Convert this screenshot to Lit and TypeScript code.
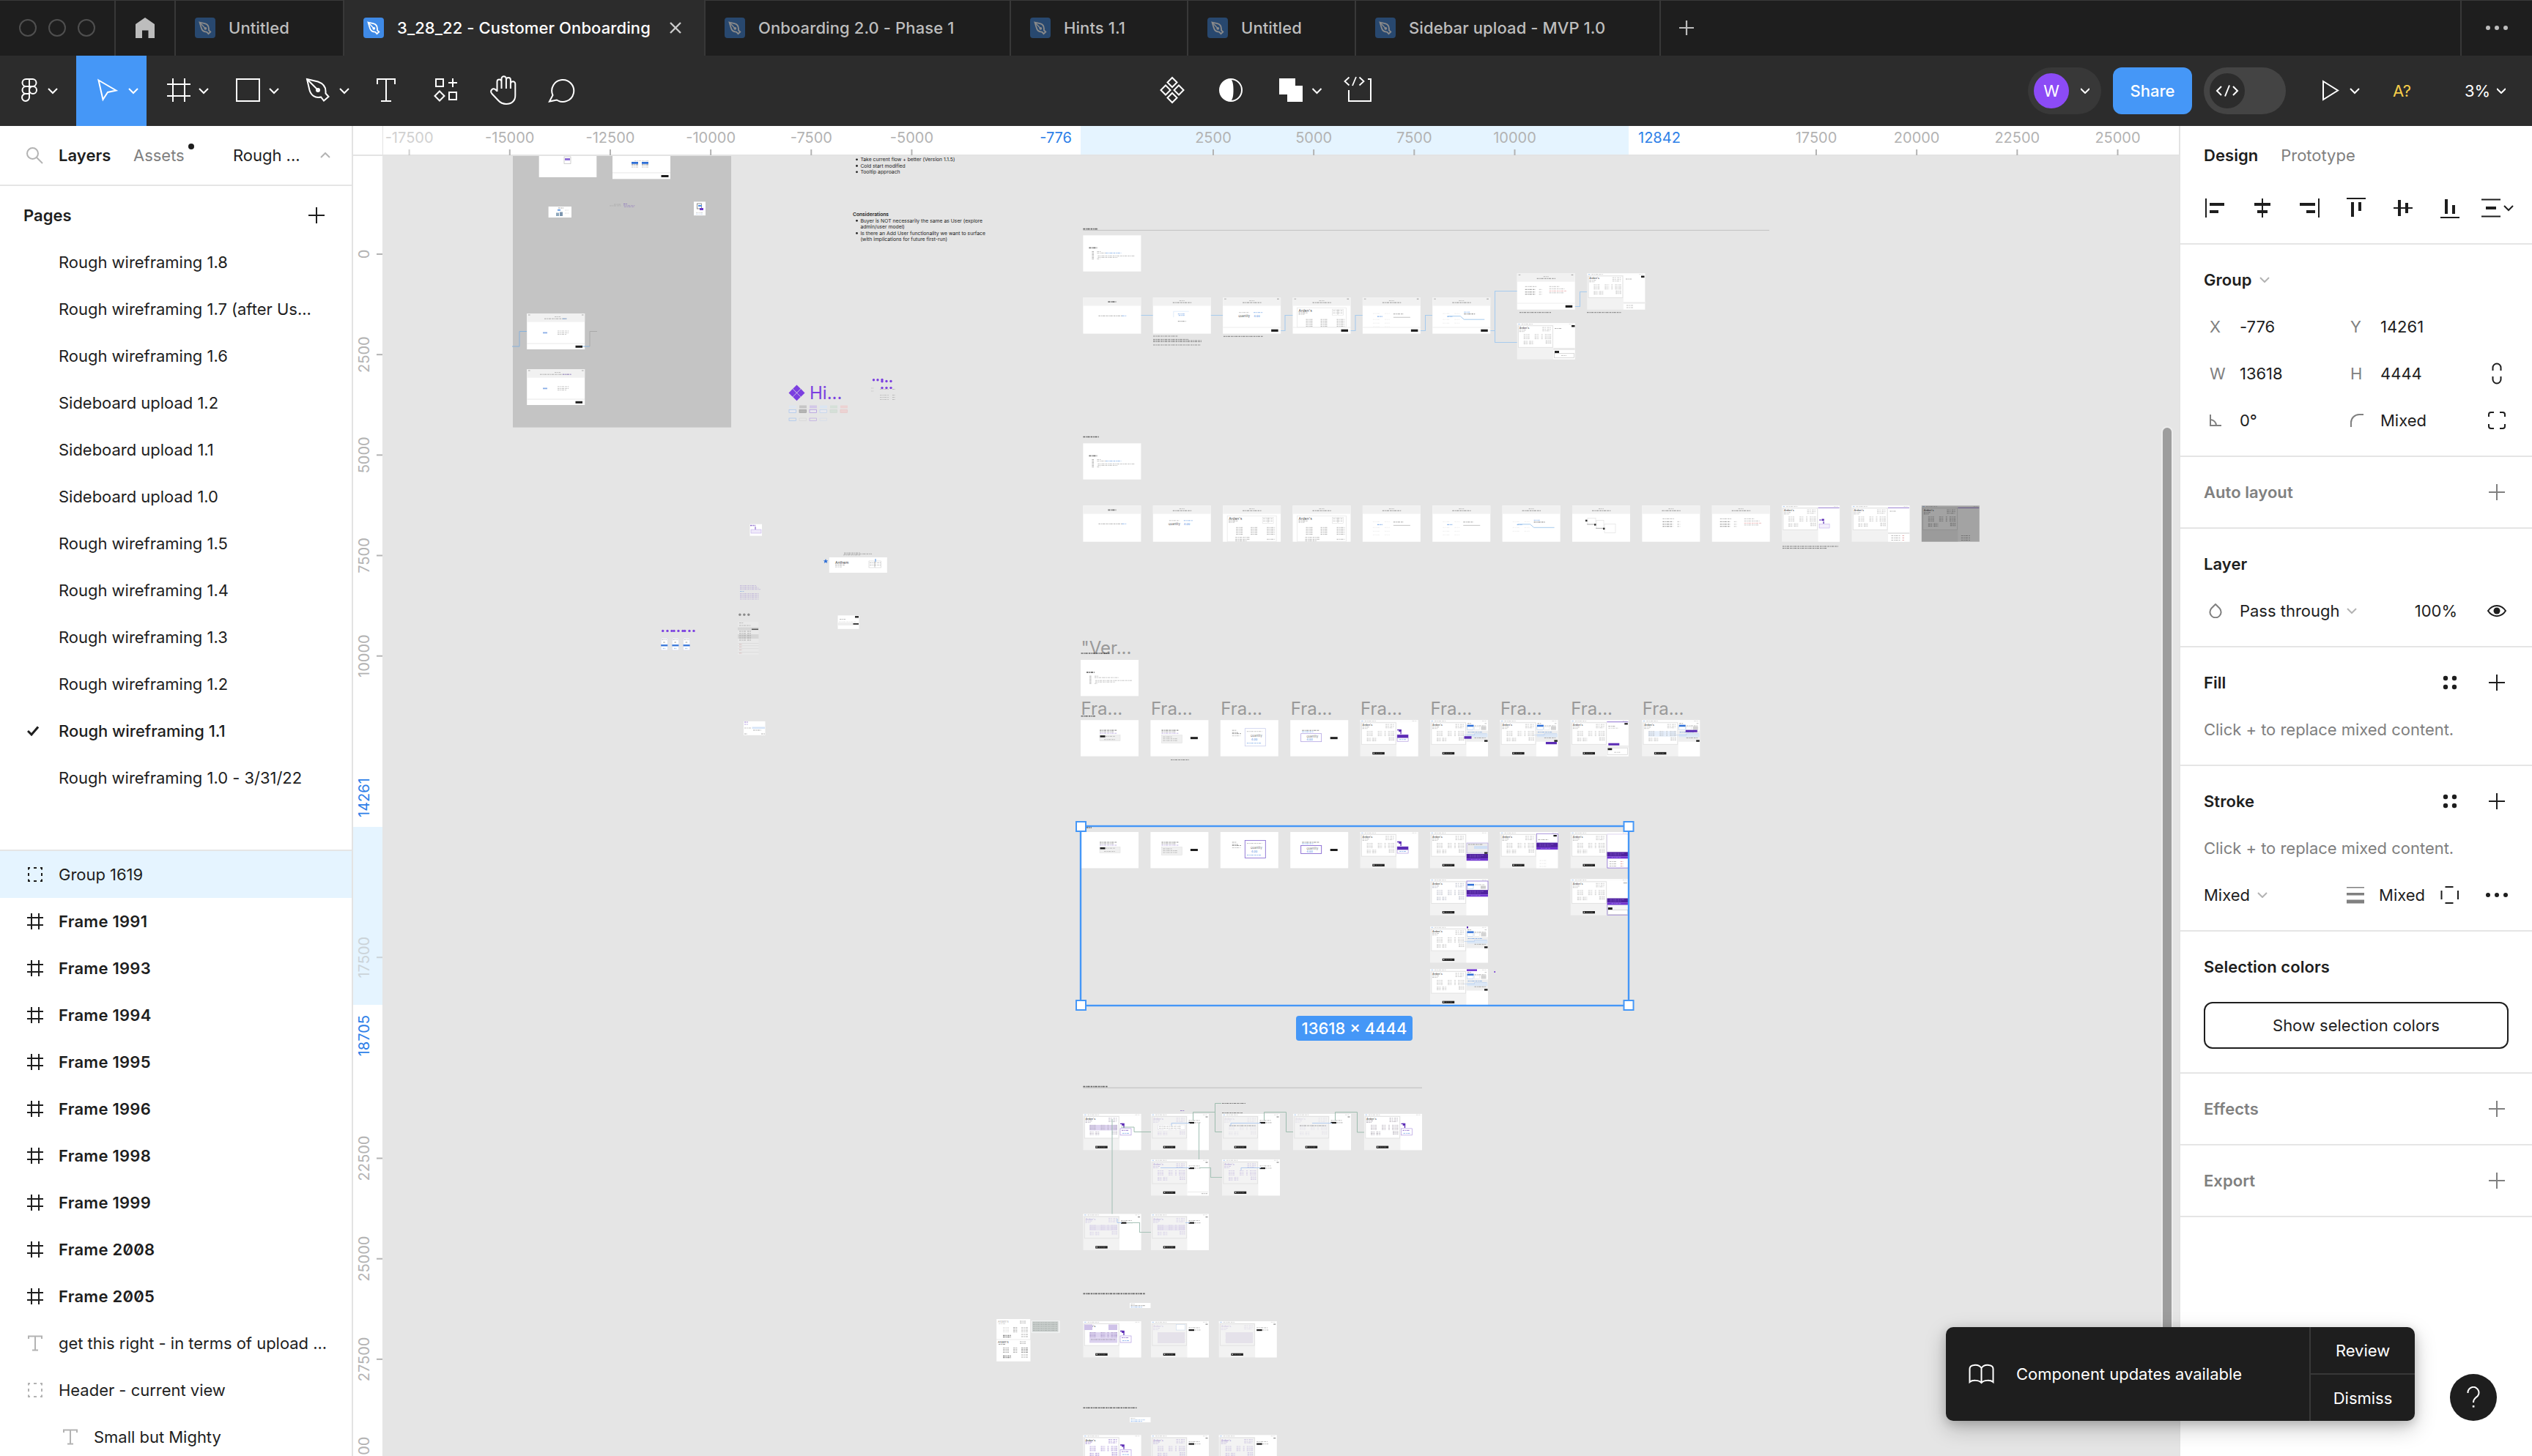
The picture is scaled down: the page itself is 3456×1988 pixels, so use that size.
import { LitElement, html, svg, css, nothing } from "lit";
import { customElement } from "lit/decorators.js";
import { classMap } from "lit/directives/class-map.js";

/* ---------- shared shapes ---------- */
const chev = (x: number, y: number, c = "#fff") =>
  svg`<path d="M${x - 6} ${y - 3}l6 6l6 -6" fill="none" stroke=${c} stroke-width="2"/>`;

const box = (w: number, h: number, body: unknown, cls = "") =>
  html`<svg class=${cls} width=${w} height=${h} viewBox="0 0 ${w} ${h}" fill="none">${body}</svg>`;

const plus = (c: string, s = 22, w = 2) =>
  box(s, s, svg`<path d="M${s / 2} 0v${s}M0 ${s / 2}h${s}" stroke=${c} stroke-width=${w}/>`);

const fileIcon = (on: boolean) => {
  const c = on ? "#fff" : "#8b8b8b";
  return box(28, 28, svg`
    <rect width="28" height="28" rx="4" fill=${on ? "#3f8ae6" : "#28486f"}/>
    <path d="M6.500 6.500L13.500 8.200C17.500 9.200 19 11.500 19 15.500V17.300L21.300 19.500L18.500 22.200L16.200 19.600C11.500 19.800 9.600 17.500 8.600 13.500Z" stroke=${c} stroke-width="1.8" fill="none"/>
    <path d="M7 7L14 14.500" stroke=${c} stroke-width="1.4"/><circle cx="14.300" cy="14.800" r="1.900" fill=${c}/>`);
};

const frameIcon = box(22, 22, svg`<path d="M6 0v22M16 0v22M0 6h22M0 16h22" stroke="#1e1e1e" stroke-width="2"/>`);
const groupIcon = (c: string) => box(22, 22, svg`<path d="M2 4.500V2H4M9 2h4M18 2h2V4.500M20 9v4M20 17.500V20H18M13 20H9M4 20H2V17.500M2 13V9" stroke=${c} stroke-width="2"/>`);
const textIcon = box(22, 22, svg`<path d="M2 5V1.500H20V5M11 1.500V20.500M7 20.500h8" stroke="#b3b3b3" stroke-width="2"/>`);

/* ---------- data ---------- */
const TABS = [
  { w: 230, t: "Untitled" },
  { w: 493, t: "3_28_22 - Customer Onboarding", on: true },
  { w: 417, t: "Onboarding 2.0 - Phase 1" },
  { w: 242, t: "Hints 1.1" },
  { w: 229, t: "Untitled" },
  { w: 416, t: "Sidebar upload - MVP 1.0" },
];

const PAGES = ["Rough wireframing 1.8", "Rough wireframing 1.7 (after Us...", "Rough wireframing 1.6", "Sideboard upload 1.2",
  "Sideboard upload 1.1", "Sideboard upload 1.0", "Rough wireframing 1.5", "Rough wireframing 1.4", "Rough wireframing 1.3",
  "Rough wireframing 1.2", "Rough wireframing 1.1", "Rough wireframing 1.0 - 3/31/22"];

const FRAMES = ["1991", "1993", "1994", "1995", "1996", "1998", "1999", "2008", "2005"];

/* ---------- canvas drawing helpers (canvas coordinates) ---------- */
const R = (x: number, y: number, w: number, h: number, f: string, s?: string, sw = 1) =>
  svg`<rect x=${x} y=${y} width=${w} height=${h} fill=${f} stroke=${s ?? "none"} stroke-width=${sw}/>`;
const ln = (x: number, y: number, w: number, c = "#999", h = 0.9) =>
  svg`<path d="M${x} ${y}h${w}" stroke=${c} stroke-opacity=".66" stroke-width=${h} stroke-dasharray="2.600 .9 1.500 .7 3.400 1.100" fill="none"/>`;
const P = (d: string, c: string, w = 1.2) => svg`<path d=${d} stroke=${c} stroke-width=${w} fill="none"/>`;
const T = (x: number, y: number, s: number, c: string, t: string, w = 400) =>
  svg`<text x=${x} y=${y} font-size=${s} fill=${c} font-weight=${w}>${t}</text>`;
const dot = (x: number, y: number, c: string, r = 1.7) => svg`<circle cx=${x} cy=${y} r=${r} fill=${c}/>`;

const BL = "#4f8de0", PU = "#5b2bb5", LB = "#a6cbee", GR = "#a7c3b8";

const overview = (x: number, y: number, blue = true) => svg`
  ${R(x, y, 79, 49.400, "#fff")}
  ${ln(x + 8, y + 17, 11, "#333", 1.8)}
  ${[0, 1, 2, 3, 4, 5].map((i) => ln(x + 12, y + 22.200 + i * 2, 3.500, "#777"))}
  ${ln(x + 19, y + 22.200, 5)}${ln(x + 19, y + 24.200, 12)}${ln(x + 31, y + 24.200, 21, blue ? BL : "#999")}
  ${ln(x + 20, y + 28.200, 50, "#999")}${ln(x + 20, y + 30.200, 27)}${ln(x + 19, y + 32.200, 4)}`;

const header = (x: number, y: number, kind: string, foot = false) => svg`
  ${R(x, y, 79, 49.400, "#fff")}${R(x, y, 79, 11.300, "#f1f1f1")}
  ${kind === "start" ? svg`${ln(x + 34, y + 6, 11, "#333", 1.800)}${ln(x + 21, y + 25, 32, "#888", 1.100)}${ln(x + 53, y + 25, 6, BL, 1.100)}`
    : svg`${ln(x + 36, y + 4.400, 7, "#888", 0.800)}${ln(x + 27, y + 7, 26, "#666", 1)}`}
  ${kind === "upload" ? svg`${P(`M${x + 28} ${y + 19}h21M${x + 28} ${y + 19}v8`, "#c5daf4", 0.5)}${ln(x + 34, y + 22.500, 10, BL)}${ln(x + 35, y + 24.500, 8, BL)}${ln(x + 34, y + 32.500, 11, "#555")}` : nothing}
  ${kind === "qty" ? svg`${ln(x + 22, y + 20.500, 14, "#999")}${ln(x + 42, y + 20.500, 12, BL)}${T(x + 21, y + 26.500, 4, "#555", "Quantity")}${T(x + 42, y + 26.500, 4, BL, "4.00")}` : nothing}
  ${kind === "doc" ? svg`${R(x + 6, y + 14, 67, foot ? 26.500 : 35, "#fff", "#e8e8e8", 0.8)}${T(x + 8, y + 19.500, 5, "#555", "Arden's")}
    ${ln(x + 8, y + 21, 12, "#777")}${ln(x + 8, y + 23, 8, "#999")}
    ${R(x + 54, y + 16, 7, 8, "none", "#ddd", 0.6)}${R(x + 62, y + 16, 7, 8, "none", "#ddd", 0.6)}${ln(x + 55, y + 18, 13)}${ln(x + 55, y + 21, 13)}
    ${[0, 1, 2, 3, 4].map((i) => svg`${ln(x + 18, y + 30 + i * 2.300, 9, "#888")}${ln(x + 38, y + 30 + i * 2.300, 9, "#888")}${ln(x + 60, y + 30 + i * 2.300, 11, "#888")}`)}
    ${foot ? nothing : svg`${ln(x + 17, y + 43.500, 20, "#888")}${ln(x + 17, y + 46, 20, "#888")}${ln(x + 17, y + 48, 16, "#888")}${ln(x + 60, y + 46, 11, "#888")}`}` : nothing}
  ${kind === "pick" ? svg`${ln(x + 20, y + 26, 7, BL, 1.300)}${[22, 30, 35, 40].map((d) => svg`${ln(x + 14, y + d, 9, "#e4e4e4")}${ln(x + 30, y + d, 7, "#e4e4e4")}`)}${ln(x + 42, y + 22.500, 14, "#666")}${R(x + 42, y + 26.500, 23, 1.200, "#ccc")}` : nothing}
  ${kind === "link" ? svg`${ln(x + 20, y + 26, 7, BL, 1.300)}${[22, 30, 35].map((d) => svg`${ln(x + 14, y + d, 9, "#e4e4e4")}${ln(x + 30, y + d, 7, "#e4e4e4")}`)}${P(`M${x + 21} ${y + 25.500}H${x + 38}L${x + 43} ${y + 30}H${x + 71}`, LB, 1)}${ln(x + 43, y + 20, 8, BL)}${ln(x + 43, y + 22.500, 15, "#666", 1.300)}` : nothing}
  ${kind === "flow" ? svg`${R(x + 21, y + 17, 11, 9, "none", "#ddd", 0.6)}${R(x + 33, y + 20, 10, 11, "none", "#ddd", 0.6)}${R(x + 44, y + 25, 15, 12, "none", "#ddd", 0.6)}
    ${R(x + 18, y + 19.300, 2.500, 2.500, "#333")}${R(x + 30, y + 24.800, 2.500, 2.500, "#333")}${R(x + 42, y + 30.300, 2.500, 2.500, "#333")}${P(`M${x + 20} ${y + 25.500}h10M${x + 32} ${y + 31}h10`, "#999", 0.700)}` : nothing}
  ${kind === "list" || kind === "list2" ? svg`${ln(x + (kind === "list" ? 28 : 11), y + 18, 16, "#888")}
    ${[22, 25.500, 28.500].map((d) => svg`${ln(x + (kind === "list" ? 28 : 11), y + d, 14, "#555", 1.100)}${ln(x + (kind === "list" ? 48 : 30), y + d, 4, "#999")}`)}
    ${kind === "list2" ? svg`${ln(x + 44, y + 18, 14)}${ln(x + 44, y + 21, 21)}${ln(x + 44, y + 24, 24, "#d98080")}${ln(x + 44, y + 26.500, 20)}` : nothing}` : nothing}
  ${foot ? svg`${R(x, y + 40.300, 79, 1, "#eee")}${R(x + 66, y + 43.500, 9.500, 3.200, "#1d1d1d")}${ln(x + 2, y + 2, 3, "#777")}${ln(x + 74, y + 2, 3, "#555")}` : nothing}`;

const small = (x: number, y: number, k: number) => svg`
  ${R(x, y, 79, 49.400, "#fff")}
  ${k < 2 ? svg`${ln(x + (k ? 15 : 26), y + 14, 24, "#555", 1.200)}${ln(x + (k ? 15 : 26), y + 16, 19, "#777")}${ln(x + (k ? 15 : 26), y + 18, 24, "#9a7fd0")}
    ${R(x + (k ? 15 : 26), y + 20.500, 28, k ? 11 : 8, "#f0f0f0", "#dcdcdc", 0.5)}${k ? svg`${ln(x + 17, y + 23, 12, "#888")}${ln(x + 17, y + 25.500, 20)}${ln(x + 17, y + 28, 20)}` : svg`${R(x + 26.500, y + 21, 7, 2.500, "#1d1d1d")}${ln(x + 34, y + 22.200, 13)}${ln(x + 32, y + 26.500, 15)}`}` : nothing}
  ${k === 2 ? svg`${ln(x + 16, y + 14, 6, "#666")}${ln(x + 16, y + 17, 8, "#666")}${ln(x + 16, y + 18.500, 12, "#444")}${ln(x + 16, y + 21.500, 11)}
    ${R(x + 33.500, y + 11.500, 28, 24, "#fff", "#c3c8ea", 0.700)}${ln(x + 36, y + 15.500, 21)}${T(x + 41, y + 23, 4, "#777", "Quantity")}${T(x + 42, y + 27.500, 4, BL, "4.00")}${ln(x + 36, y + 31.500, 20, BL)}` : nothing}
  ${k === 3 ? svg`${ln(x + 16, y + 14, 24, "#555", 1.100)}${ln(x + 16, y + 16, 16, BL)}${R(x + 14.500, y + 18.500, 28, 11, "#fff", "#a796dd", 0.700)}${T(x + 22, y + 23.500, 4, "#777", "Quantity")}${T(x + 22, y + 28, 4, BL, "4.00")}` : nothing}
  ${k === 1 || k === 3 ? R(x + 54.500, y + 23, 10, 3, "#1d1d1d") : nothing}`;

/* two-pane editor thumbnail; `o.c` colours the cell text, `o.p` selects the right pane */
const doc = (x: number, y: number, o: { c?: string; dim?: boolean; p?: string; hl?: string } = {}) => {
  const c = o.c ?? "#a6a6a6";
  const paper = o.dim ? "#f3f3f3" : "#fff";
  const r = x + 49.500;
  return svg`
  ${R(x, y, 79, 49.400, "#f2f2f2")}${R(x, y, 79, 2.400, "#fff")}${ln(x + 1.500, y + 1.300, 3, BL, 0.7)}${ln(x + 6, y + 1.300, 16, "#999", 0.7)}${ln(x + 71, y + 1.300, 6, "#bbb", 0.7)}
  ${R(x + 1.800, y + 3.600, 46.800, 29.500, paper, "#e0e0e0", 0.9)}
  ${T(x + 3, y + 8, 3.600, o.dim ? c : "#666", "Arden's", 600)}${ln(x + 3, y + 9.500, 9, c, 1)}${ln(x + 3, y + 11.500, 7, c, 1)}
  ${ln(x + 34.500, y + 6, 5, c)}${ln(x + 41, y + 6, 5, c)}${ln(x + 34.500, y + 8.300, 5, c)}${ln(x + 41, y + 8.300, 5, c)}${ln(x + 34.500, y + 10.500, 11, c)}
  ${o.hl ? R(x + 8.500, y + 15, 38, 7.500, o.hl) : nothing}
  ${[15.500, 17.700, 19.500, 21.300].map((d) => svg`${ln(x + 9, y + d, 8, c, 0.8)}${ln(x + 24, y + d, 6, c, 0.8)}${ln(x + 33, y + d, 2, c, 0.8)}${ln(x + 38, y + d, 8.500, c, 0.8)}`)}
  ${[24.800, 26.600, 28.300].map((d) => svg`${ln(x + 9, y + d, 6, c, 0.9)}${ln(x + 16.500, y + d, 6, c, 0.9)}${ln(x + 39, y + d - 0.8, 7.500, c)}`)}
  ${R(r, y + 2.400, 29.500, 47, "#fff")}
  ${o.p === "none" ? nothing : R(x + 16.700, y + 43.700, 16.500, 3.300, "#222")}${o.p === "none" ? nothing : svg`${R(x + 18, y + 44.600, 1.300, 1.300, "#fff")}${ln(x + 21, y + 45.300, 10, "#888", 0.8)}`}
  ${o.p === "tip" || o.p === "tipo" ? svg`${P(`M${r + 1} ${y + 13.500}h3M${r + 6} ${y + 16}v3`, PU, 1.300)}${R(r + 3.200, y + 12.800, 3.600, 3.200, PU)}
    ${R(r + 1, y + 20, 15, 9, "#fff", "#a58bdc", 0.6)}${o.p === "tip" ? R(r + 1, y + 20, 15, 4.300, PU) : ln(r + 3, y + 22.500, 10, PU)}${ln(r + 4, y + 26.500, 9, BL)}` : nothing}
  ${o.p === "side" || o.p === "low" || o.p === "mid" ? svg`${ln(r + 1.500, y + 4.600, 5, "#666")}${ln(r + 25, y + 4.600, 3, "#999")}
    ${R(r + 1, y + 6.500, 9, 2.500, "#2f6fd6")}${ln(r + 11, y + 7.800, 16, "#999", 1.200)}${R(r + 1, y + 9, 8.500, 4.500, "#fff", "#9fc0ec", 0.5)}${R(r + 11, y + 9, 7, 4.500, "#fff", "#ddd", 0.5)}${R(r + 20, y + 8.500, 7, 5, "#d3d3d3")}
    ${R(r, y + 14.500, 29.500, 15, "#eee")}${ln(r + 2, y + 16.500, 20, BL)}${R(r + 1, y + 18.800, 28, 4.500, "#dbe7f6")}${P(`M${r - 3} ${y + 20.500}h14v-2h17`, "#a9c6ee", 0.500)}${ln(r + 11, y + 24.300, 16, "#777")}${R(r + 24.500, y + 27.200, 4.500, 2.400, "#1d1d1d")}` : nothing}
  ${o.p === "side" ? R(r - 3, y + 22, 10, 3.500, PU) : nothing}
  ${o.p === "low" ? R(r + 13, y + 29.800, 15, 3.200, PU) : nothing}
  ${o.p === "mid" && o.hl ? R(r + 10, y + 13.500, 16, 3, PU) : nothing}
  ${o.p === "panel" ? svg`${R(r, y + 2, 29, 1, "#8c6fd0")}${R(r + 24, y + 4, 4.500, 2.200, "#1d1d1d")}${ln(r + 2, y + 8.400, 9, "#777")}${ln(r + 2, y + 11, 14, "#aaa")}${R(r + 2, y + 31.500, 15, 3.300, PU)}${R(r, y + 34.500, 29.500, 3, "#eee")}${R(r + 1, y + 38, 6, 3, "#222")}${R(r + 0.800, y + 38, 27.500, 9.500, "none", "#ccc", 0.6)}${ln(r + 10, y + 44, 8, "#999")}` : nothing}
  ${o.p === "edit" ? svg`${ln(r + 2, y + 8.900, 15, "#888")}${R(r + 2, y + 11, 7.500, 2.200, "#1d1d1d")}${ln(r + 10, y + 12, 8, "#999", 1.200)}${R(r + 25, y + 3.600, 3, 1, "#777")}` : nothing}`;
};

const purple = (x: number, y: number, h: number) => svg`${R(x, y, 29.300, h * 0.66, "#4f209f")}${R(x, y + h * 0.66, 29.300, h * 0.34, "#6f33d0")}
  ${ln(x + 4, y + h * 0.2, 20, "#8d6bd0")}${ln(x + 4, y + h * 0.43, 16, "#8d6bd0")}${ln(x + 6, y + h * 0.82, 13, "#a98bea")}`;

const STEP = 95.370;
const col = (i: number) => 1478.400 + i * STEP;
const colS = (i: number) => 1475 + i * 95.400 + (i === 8 ? 3 : i === 7 ? 1 : 0);

const leftArea = svg`
  ${R(700, 200, 298, 383.600, "#c4c4c4")}
  ${R(735.700, 200, 78.600, 42, "#fff")}${R(770, 214, 9, 9.500, "#fff", "#bbb", 0.7)}${R(771, 216, 7, 3, "#8f6fd5")}
  ${R(836, 200, 79, 44.400, "#fff")}${R(836, 235.500, 79, 0.900, "#e6e6e6")}${R(902.500, 239, 10, 3, "#1d1d1d")}
  ${R(862, 221, 9, 2.800, "#2f6fd6")}${R(876, 221, 9, 2.800, "#2f6fd6")}${ln(862, 225, 9, "#777", 1.400)}${ln(876, 225, 9, "#777", 1.400)}${ln(862, 228, 9)}${ln(876, 228, 9)}${ln(866, 219.500, 20, "#aaa", 0.700)}
  ${R(748.600, 282, 31.400, 15, "#fff")}${ln(762, 284, 7, "#555")}${R(761, 286, 4, 1.600, BL)}${R(759, 290.500, 4, 4.500, "#8fa8bc")}${R(764, 289.500, 4, 5.500, "#7c95ae")}${ln(771, 287, 5, "#ccc")}${ln(771, 291, 6, "#ccc")}
  ${ln(838, 279, 9, "#999", 0.8)}${ln(832, 281, 16, "#999", 0.7)}${ln(851, 278.500, 5, PU, 0.8)}${ln(851, 280.700, 16, "#8c6fc0", 0.8)}${ln(852, 282.400, 14, "#8c6fc0", 0.8)}
  ${R(947, 275.400, 16, 18.800, "#fff")}${R(951.500, 278, 6, 7, "#fff", "#777", 0.8)}${R(953, 280, 5, 2, BL)}${R(955, 284, 5, 3, "#6a35c8")}${ln(950, 290.300, 10, "#999", 0.7)}${ln(950, 292.300, 9, "#9ab8e8", 0.7)}
  ${[428, 504].map((y, i) => svg`${R(719.200, y, 79, 49, "#fff")}${R(719.200, y, 79, 11.700, "#f1f1f1")}${ln(757, y + 4.500, 8)}${ln(737 + 6 * (1 - i), y + 7.200, i ? 42 : 31, "#888", 1)}${ln(768, y + 7.200, i ? 12 : 6, i ? "#8c6fd0" : BL, 1)}
    ${R(741, y + 25.500, 6, 1.800, "#8aaee6")}${ln(761, y + 24, 16)}${ln(761, y + 26.500, 15)}${ln(761, y + 28.500, 12)}${R(719.200, y + 40.600, 79, 0.900, "#e6e6e6")}${R(785.500, y + 43.800, 9.500, 3, "#1d1d1d")}${ln(721, y + 2, 3, "#777")}${ln(794, y + 2, 3, "#777")}`)}
  ${P("M699 473H709V452.500H719", "#86b2dc", 1)}${P("M795 473H805", "#86b2dc", 1)}${P("M805 473V452.500H815", "#aaa", 1)}

  ${[218, 226.700, 235].map((y) => dot(1169.500, y - 0.200, "#222", 1.400))}
  ${T(1174.400, 220.400, 6.800, "#222", "Take current flow + better (Version 1.1.5)")}
  ${T(1174.400, 229, 6.800, "#222", "Cold start modified")}
  ${T(1174.400, 237.400, 6.800, "#222", "Tooltip approach")}
  ${T(1164, 295, 6.700, "#222", "Considerations", 600)}
  ${dot(1169.500, 301.300, "#222", 1.400)}${dot(1169.500, 318.400, "#222", 1.400)}
  ${T(1174.400, 303.800, 6.800, "#222", "Buyer is NOT necessarily the same as User (explore")}
  ${T(1174.400, 312.200, 6.800, "#222", "admin/user model)")}
  ${T(1174.400, 320.700, 6.800, "#222", "Is there an Add User functionality we want to surface")}
  ${T(1174.400, 329, 6.800, "#222", "(with implications for future first-run)")}

  ${[[1087.500, 530.800], [1081.800, 536.400], [1093.200, 536.400], [1087.500, 542]].map(([x, y]) => svg`<path d="M${x} ${y - 5.300}L${x + 5.300} ${y}L${x} ${y + 5.300}L${x - 5.300} ${y}Z" fill="#7b3fe0"/>`)}
  ${T(1105, 545, 24, "#7b3fe0", "Hi...")}
  ${[0, 1, 2, 3, 4, 5].map((i) => {
    const x = 1076.500 + i * 14, cs = ["#c5d8f0", "#c6c6c6", "#d3c8e8", "#dbe5f2", "#d5e0d8", "#ecd3d3"];
    return svg`${R(x + 0.500, 553.500, 10, 4, i ? cs[i] : "#dfe6f0")}${R(x + 0.500, 559.500, 9.500, 3.800, i === 1 ? "#b5b5b5" : i > 3 ? cs[i] : "#e9e9ee", ["#a5c4ee", "#999", "#a98ede", "#bcd2f0", "#cdd8d0", "#e8c4c4"][i], 0.7)}
      ${i < 4 ? R(x + 0.500, 571, 9.500, 3.600, "none", ["#a5c4ee", "#d6d6d6", "#bba7e2", "#d5dcea"][i], 0.7) : nothing}`;
  })}
  ${[[1192.500, 518.700], [1198, 518.700], [1204, 518.500], [1204, 520.700], [1210, 520.500], [1216, 520.500], [1204, 529.600], [1210, 529.600], [1216, 529.600]].map(([x, y]) => dot(x, y, "#7b3fe0"))}
  ${ln(1189, 530, 4, "#bbb")}${ln(1189, 534, 4, "#bbb")}${[531.500, 539.500, 542.500, 545.500].map((y) => svg`${ln(1201, y, 12, "#aaa")}${ln(1218, y, 4, "#999")}`)}

  ${R(1023.500, 715.600, 16.500, 16, "#fff")}${ln(1024, 717.500, 7, PU, 1.600)}${R(1025, 723, 14, 5, "#efe9fa", "#b9a3e6", 0.5)}${P("M1031 719v4", PU, 0.8)}
  ${R(1131.800, 761, 79, 21, "#fff")}${T(1140, 770, 5, "#444", "Anthem")}${ln(1140, 771.500, 13, "#777")}${ln(1140, 774, 9)}${R(1186, 766, 7.500, 9, "none", "#ccc", 0.6)}${R(1194.500, 766, 8, 9, "none", "#ccc", 0.6)}${ln(1187, 768.500, 15)}${ln(1187, 771.500, 15)}${P("M1195 763v4", BL, 1)}
  ${ln(1152, 754.800, 22)}${ln(1152, 756.300, 38, "#777")}${ln(1151, 757.800, 24)}
  <path d="M1127 763l1 2.200h2.200l-1.700 1.500l.7 2.400l-2.200 -1.400l-2.200 1.400l.7 -2.400l-1.700 -1.500h2.200z" fill="#2f6fd6"/>
  ${[799.500, 801.300, 803, 804.700].map((y, i) => ln(1010, y, 22 + i * 2, "#a48fd0", 0.7))}${ln(1010, 807.500, 6, BL, 0.7)}${[810.500, 812.300, 814, 815.700, 818].map((y) => ln(1010, y, 26, "#a48fd0", 0.7))}
  ${[1009.900, 1015.800, 1021.800].map((x) => dot(x, 839.300, "#8b8b8b"))}
  ${R(1007, 849, 28.500, 45, "#e9e9e9")}${ln(1009, 850.500, 6)}${ln(1009, 854, 16)}${R(1007, 856.500, 28.500, 4, "#d6d6d6")}${R(1007, 866, 28.500, 6, "#d6d6d6")}${R(1026, 858.500, 9, 1.500, "#555")}${[862, 865, 868, 871, 874].map((y) => svg`${ln(1009, y, 10, "#888")}${ln(1020, y, 5, "#777")}`)}
  ${[878, 881.500, 885.500, 890].map((y) => svg`${R(1007.500, y, 28, 0.600, "#d5d5d5")}${ln(1009, y + 1.800, 4, "#c99")}`)}
  ${[904.700, 911, 917, 920, 926, 932, 934.700, 941, 947].map((x) => dot(x, 861.400, "#7b3fe0"))}
  ${[902.200, 917.400, 932.600].map((x) => svg`${R(x, 871.700, 9, 16.100, "#fff", "#d7d7e6", 0.5)}${ln(x + 1, 873.500, 7)}${ln(x + 3, 877, 3, "#555")}${R(x, 880, 9, 2.400, "#3f7bda")}${ln(x + 2.500, 885.300, 4, BL)}`)}
  ${R(1143.500, 840.300, 29, 18.500, "#fff")}${R(1167, 841, 5, 2.600, "#333")}${ln(1146, 845.500, 8, "#888")}${R(1143.500, 850, 29, 4, "#efefef")}${R(1164.500, 851, 7.500, 1.800, "#333")}${ln(1145, 849, 24, "#bbb", 0.5)}
  ${R(1015, 984.800, 29.500, 19, "#fff")}${ln(1016, 986, 5, PU)}${ln(1016, 989, 5, "#8c6fd0")}${R(1026.500, 992.500, 17.500, 2.600, "#d5e4f8")}${ln(1016, 994, 9, "#999")}${ln(1028, 997, 11, "#777")}${ln(1016, 1002, 4, "#777")}${ln(1039, 1002, 5, "#777")}`;

const docs = svg`
  ${ln(1478.400, 312.600, 20.500, "#222", 1.700)}${R(1478.400, 313.900, 936.600, 1, "#c3c3c3")}
  ${overview(1478.400, 321.300)}
  ${P("M1557 430.500h17M1652 430.500h18M1745 451.500H1754V430.500H1765M1840 451.500H1850V430.500H1860M1936 451.500H1945.500V430.500H1955M2031 451.500H2040.500M2071 397.500H2040.500V467.500H2071M2146 418.500H2156.500V398.500H2166", LB, 1.1)}
  ${["start", "upload", "qty", "doc", "pick", "link"].map((k, i) => header(col(i), 406.200, k, i > 1))}
  ${header(2070.700, 373.300, "list2", true)}
  ${doc(2166.300, 373.300, { p: "none" })}${R(2240, 376.500, 4.500, 2.500, "#1d1d1d")}${ln(2219, 381, 8, "#777")}${R(2215.800, 412.500, 29.500, 2, "#eaeaea")}${ln(2220, 417, 9)}${ln(2220, 420, 9)}
  ${doc(2070.700, 441.200, { p: "none" })}${R(2145, 444, 4.500, 2.500, "#1d1d1d")}${ln(2122, 448.500, 10, "#777")}${R(2120.200, 475, 29.500, 3, "#e9e9e9")}${R(2122, 479, 6, 3, "#222")}${R(2121.500, 482.500, 27, 6, "#fff", "#ccc", 0.7)}${ln(2131, 485.500, 7)}
  ${ln(1574, 459, 34, "#444", 0.8)}${ln(1574, 463.400, 48, "#444", 0.8)}${ln(1574, 465, 66, "#444", 0.8)}${ln(1574, 466.600, 66, "#444", 0.8)}${ln(1574, 471, 65, "#444", 0.8)}
  ${ln(1670, 459.300, 54, "#444", 1)}${ln(2074, 426.700, 43, "#444", 1)}${ln(2166, 426.700, 47, "#444", 1)}

  ${ln(1478.400, 596.500, 21.500, "#222", 1.700)}${overview(1478.400, 605.300)}
  ${["start", "qty", "doc", "doc", "pick", "pick", "link", "flow", "list", "list2"].map((k, i) => header(col(i), 690.300, k))}
  ${doc(col(10), 690.300, { p: "none" })}${R(col(10) + 49.500, 692.900, 29, 1, "#9b82d3")}${P(`M${col(10) + 51} 710h3M${col(10) + 57} 712v3`, PU, 1.200)}${R(col(10) + 54.500, 708.500, 3.200, 2.600, PU)}${R(col(10) + 51, 715.500, 14, 5.500, "#f4effc", "#b9a3e6", 0.5)}
  ${doc(col(11), 690.300, { p: "none" })}${R(col(11) + 49.500, 692.900, 29, 1, "#9b82d3")}${ln(col(11) + 52, 698, 8, "#777")}${R(col(11) + 49.500, 727, 29.500, 2, "#e5e5e5")}${[731.500, 734.500, 737.500].map((y) => svg`${ln(col(11) + 54, y, 12, "#888")}${ln(col(11) + 69, y, 3, "#d07070")}`)}
  <g>${doc(col(12), 690.300, { p: "none", c: "#777" })}${R(col(12) + 49.500, 692.900, 29, 1, "#9b82d3")}${[731.500, 734.500, 737.500].map((y) => ln(col(12) + 54, y, 12, "#777"))}<rect x=${col(12)} y="690.300" width="79" height="49.400" fill="#000" fill-opacity=".36"/></g>
  ${ln(2433, 746, 76, "#444", 1)}${ln(2433, 748.600, 61, "#444", 1)}

  ${T(1475.600, 893, 24, "#999", "\"Ver...")}${ln(1475.600, 892, 39, "#222", 1.500)}
  ${overview(1475, 901, false)}
  ${[0, 1, 2, 3, 4, 5, 6, 7, 8].map((i) => T(colS(i) + 0.500, 975.500, 24, "#999", "Fra..."))}
  ${ln(1475.600, 977.700, 20, "#222", 1.500)}
  ${[0, 1, 2, 3].map((i) => small(colS(i), 983.200, i))}
  ${["tip", "side", "low", "panel", "mid"].map((p, i) => doc(colS(i + 4), 983.200, { p, hl: i === 4 ? "#e6effb" : undefined }))}
  ${ln(1598, 1037.500, 25, "#444", 0.9)}

  ${ln(1483, 1130, 7, "#222", 1.500)}
  ${[0, 1, 2, 3].map((i) => small(colS(i), 1136, i))}
  ${R(colS(2) + 33.500, 1147.500, 28, 24, "none", "#8a6cd2", 0.800)}${R(colS(3) + 14.500, 1154.500, 28, 11, "none", "#8a6cd2", 0.800)}
  ${doc(colS(4), 1136, { p: "tip" })}
  ${doc(colS(5), 1136)}${R(colS(5) + 50, 1151, 29, 14, "#ececec", "#a793dd", 0.600)}${R(colS(5) + 60, 1155, 18, 4, "#cfdff5")}${ln(colS(5) + 52, 1153, 20, "#666")}${R(colS(5) + 74, 1163.500, 4.500, 2.200, "#1d1d1d")}${purple(colS(5) + 49.700, 1166, 9.200)}
  ${doc(colS(6), 1136)}${R(colS(6) + 50, 1138.500, 29, 12, "#fff", "#8c6fd0", 0.700)}${R(colS(6) + 73, 1140, 4.500, 2.200, "#1d1d1d")}${ln(colS(6) + 52, 1146.500, 14, "#777")}${purple(colS(6) + 49.700, 1151, 9)}${[1175, 1179, 1183].map((y) => ln(colS(6) + 54, y, 9, "#ddd"))}
  ${doc(colS(7), 1136)}${R(colS(7) + 50, 1139, 29, 46, "#fff", "#c9bce9", 0.6)}${purple(colS(7) + 49.700, 1163.300, 9)}${P(`M${colS(7) + 50} 1172v13.200h29v-13`, "#8c6fd0", 0.7)}${[1176.500, 1179.500, 1182.500].map((y) => svg`${ln(colS(7) + 53, y, 10, "#888")}${ln(colS(7) + 68, y, 4, "#d07070")}`)}
  ${doc(colS(5), 1200.300, { c: "#9aa0b0" })}${R(colS(5) + 50, 1203, 29, 12.500, "#fff", "#8c6fd0", 0.8)}${R(colS(5) + 51, 1206.800, 9, 2.500, "#2f6fd6")}${ln(colS(5) + 61, 1208, 14)}${R(colS(5) + 51, 1209.500, 8, 4, "#fff", "#9fc0ec", 0.5)}${R(colS(5) + 69, 1209.500, 7, 4, "#ccc")}${purple(colS(5) + 49.700, 1215.300, 9)}
  ${doc(colS(7), 1200.300)}${R(colS(7) + 72, 1204.500, 5, 2, "#ccc")}${purple(colS(7) + 49.700, 1226.500, 8.700)}${R(colS(7) + 50, 1235.500, 29, 13.800, "#f6f6f6", "#8c6fd0", 0.7)}${R(colS(7) + 51, 1239, 6, 3, "#222")}${R(colS(7) + 51, 1242.500, 27, 6, "#fff", "#bbb", 0.5)}
  ${doc(colS(5), 1265, { p: "mid" })}${R(colS(5) + 50, 1265, 2, 2.500, PU)}
  ${doc(colS(5), 1323, { p: "mid" })}${R(colS(5) + 50, 1323.400, 14, 2.500, "#6f33d0")}
  ${R(2039.500, 1326, 1.500, 2, "#6f33d0")}

  ${ln(1478.400, 1483.600, 34, "#222", 1.600)}${R(1478.400, 1484.700, 462.600, 1, "#bcbcbc")}
  ${doc(1478.500, 1520.900, { p: "tipo", c: "#9a93a8", hl: "#ddd3ef" })}
  ${doc(1571, 1520.900, { p: "edit", dim: true, c: "#cfc9e0" })}${R(1581, 1536.300, 36, 5.500, "#fff")}${ln(1582, 1538, 30, "#999")}${ln(1582, 1540.500, 30, "#aaa")}
  ${doc(1668, 1520.900, { p: "edit", dim: true, c: "#dddae6" })}${ln(1678, 1537, 36, "#777", 1)}
  ${doc(1765, 1520.900, { p: "edit", dim: true, c: "#dddae6" })}${ln(1774, 1537, 36, "#777", 1)}
  ${doc(1862, 1520.900, { p: "tipo", c: "#8d8795" })}
  ${doc(1571, 1583, { p: "edit", dim: true, c: "#bdb1dc" })}${R(1621, 1627, 28, 0.800, "#e6e6e6")}${ln(1640, 1629.700, 8, "#777")}
  ${doc(1668, 1583, { p: "edit", dim: true, c: "#bdb1dc" })}
  ${doc(1478.500, 1657.600, { p: "edit", dim: true, c: "#c8bfe2", hl: "#e7e4ef" })}
  ${doc(1571, 1657.600, { p: "edit", dim: true, c: "#c8bfe2", hl: "#e7e4ef" })}
  ${P("M1530 1539H1548V1545.500H1571M1628.500 1530V1518.500H1658.500M1668 1545.500H1658.500V1506.500H1667M1725.500 1530V1518.500H1755.500V1545.500H1765M1822.500 1530V1518.500H1852.500V1546H1862", "#9dbcae", 1)}
  ${P("M1518 1528V1657.500M1636.500 1533V1583M1637 1594.500H1652.500V1607.500H1668M1540 1669.500H1555.500V1682.500H1571", GR, 1.100)}
  ${P("M1599 1537V1533.500H1624M1680 1537V1533.500H1721M1791 1533.500H1818M1584 1594.500H1624M1694 1598V1594.500H1721M1525 1664V1669.500H1531M1618 1669.500H1624", "#a9c6ee", 0.900)}
  ${ln(1668, 1506.500, 32, "#444", 1.100)}${ln(1668, 1519.500, 28, "#444")}${ln(1611, 1516.500, 6, PU, 0.8)}

  ${ln(1478.500, 1766.400, 85, "#222", 1.600)}${R(1542, 1779, 28.500, 7, "#fff")}${ln(1543.500, 1780.700, 5)}${ln(1543.500, 1782.700, 20, "#666")}${ln(1543.500, 1784.700, 16, BL)}
  ${doc(1478.500, 1804, { p: "tipo", c: "#8a75b5", hl: "#ddd3ef" })}${R(1487, 1826.500, 38, 7, "#dbd1ee")}${R(1480, 1808.500, 11, 7.500, "#cfc2e8")}${R(1513, 1808.500, 12, 7.500, "#cfc2e8")}${ln(1489, 1829, 34, "#888")}
  ${doc(1571, 1804, { p: "edit", dim: true, c: "#d5cfe4" })}${R(1580, 1819, 37, 15, "#e5e2ea")}${R(1605.500, 1808.500, 12, 7.500, "#fff", "#cde", 0.6)}
  ${doc(1663.700, 1804, { p: "edit", dim: true, c: "#d5cfe4" })}${R(1673, 1819, 37, 15, "#e5e2ea")}
  ${R(1360.200, 1801, 46, 27.600, "#fff")}${R(1360.200, 1829.400, 46.300, 29.400, "#fff")}
  ${[1804, 1832].map((y, i) => svg`${T(1362, y + 2, 4, i ? "#444" : "#aaa", "Arden's")}${ln(1363, y + 3.500, 9, i ? "#555" : "#bbb")}${ln(1392, y, 8, "#888", 1)}${ln(1392, y + 2.300, 8, "#888", 1)}
    ${[8.500, 10.500, 12.500, 14.500].map((d) => svg`${ln(1369, y + d, 8, i ? "#777" : "#ccc")}${ln(1383, y + d, 6, "#777")}${ln(1394, y + d, 9, i ? "#666" : "#aaa", 1)}`)}${ln(1369, y + 19.500, 5.500, "#444", 1.300)}${ln(1375, y + 19.500, 5, "#555", 1.300)}${ln(1369, y + 21.700, 11, "#555", 1.300)}${ln(1394, y + 18, 9, "#777")}${ln(1394, y + 21, 9, "#777")}`)}
  ${R(1407.700, 1803.200, 39, 16.600, "#f4f5f5")}${R(1409, 1804.200, 35.500, 14.200, "#c9cecc")}${[1806, 1808.500, 1811, 1814, 1816.500].map((y) => ln(1410, y, 33, "#8b9491", 0.7))}

  ${ln(1478.500, 1922.200, 73, "#222", 1.600)}${R(1542, 1935, 28.500, 7, "#fff")}${ln(1543.500, 1936.700, 6)}${ln(1543.500, 1938.700, 20, "#8ab0e0")}${ln(1543.500, 1940.700, 16, BL)}
  ${doc(1478.500, 1959.500, { p: "tipo", c: "#7f5fc0" })}${doc(1571, 1959.500, { p: "edit", dim: true, c: "#b4a6d6" })}${doc(1663.700, 1959.500, { p: "edit", dim: true, c: "#b4a6d6" })}`;

/* ---------- rulers ---------- */
const UNIT = 137.170;
const H_LABELS = [-17500, -15000, -12500, -10000, -7500, -5000, 2500, 5000, 7500, 10000, 17500, 20000, 22500, 25000];
const V_LABELS = [0, 2500, 5000, 7500, 10000, 17500, 22500, 25000, 27500, 30000];

@customElement("app-root")
export class AppRoot extends LitElement {
  static styles = css`
    :host { display: block; font-family: Inter, "Liberation Sans", sans-serif; font-size: 22px; color: #1e1e1e; letter-spacing: -0.02px; }
    * { box-sizing: border-box; }
    svg { display: block; flex: none; }
    .app { width: 3456px; height: 1988px; display: grid; grid-template-rows: 76px 96px 1816px; overflow: hidden; background: #fff; position: relative; }
    .tabs { display: flex; background: #1e1e1e; box-shadow: inset 0 1px #3a3a3a; color: #bdbdbd; font-weight: 500; letter-spacing: 0.1px; }
    .lights { width: 158px; border-right: 2px solid #383838; display: flex; align-items: center; gap: 16px; padding-left: 26px; }
    .light { width: 24px; height: 24px; border: 2px solid #4f4f4f; border-radius: 50%; }
    .home { width: 82px; border-right: 2px solid #383838; display: flex; align-items: center; justify-content: center; }
    .tab { display: flex; align-items: center; padding-left: 26px; gap: 18px; border-right: 2px solid #383838; white-space: nowrap; }
    .tab.on { background: #2c2c2c; color: #fff; }
    .tab .close { margin-left: 8px; }
    .newtab { padding-left: 25px; display: flex; align-items: center; flex: 1; }
    .more { width: 98px; border-left: 2px solid #383838; display: flex; align-items: center; justify-content: center; }
    .toolbar { background: #2c2c2c; display: grid; grid-template-columns: 1fr auto 1fr; }
    .tools, .mid, .right { display: flex; align-items: center; }
    .sel { background: #4597f7; }
    .right { justify-content: flex-end; }
    .who { width: 100px; height: 64px; border-radius: 32px; background: #383838; display: flex; align-items: center; padding-left: 8px; gap: 16px; }
    .face { width: 48px; height: 48px; border-radius: 50%; background: #8c4bf6; color: #fff; display: grid; place-items: center; }
    .share { width: 108px; height: 64px; border-radius: 12px; background: #4597f7; color: #fff; font-weight: 500; display: grid; place-items: center; margin: 0 16px; }
    .dev { width: 112px; height: 64px; border-radius: 32px; background: #444; display: flex; align-items: center; padding-left: 8px; }
    .knob { width: 48px; height: 48px; border-radius: 50%; background: #2c2c2c; display: grid; place-items: center; }
    .aq { color: #f5cd4a; width: 66px; margin-left: 26px; }
    .zoom { color: #fff; display: flex; align-items: center; justify-content: space-between; width: 56px; margin-left: 32px; margin-right: 36px; white-space: nowrap; }
    .main { display: grid; grid-template-columns: 482px 2492px 482px; height: 1816px; }

    .left { border-right: 2px solid #e3e3e3; display: flex; flex-direction: column; overflow: hidden; white-space: nowrap; }
    .ltabs { height: 82px; flex: none; border-bottom: 2px solid #e5e5e5; display: flex; align-items: center; padding-left: 34px; }
    .b { font-weight: 600; letter-spacing: 0.05px; }
    .m { font-weight: 500; }
    .num { letter-spacing: 0.25px; font-feature-settings: "zero" 1; }
    .grey { color: #808080; }
    .lname { margin-left: 20px; width: 102px; }
    .lassets { width: 71px; }
    .ldot { width: 8px; height: 8px; border-radius: 50%; background: #1e1e1e; margin: -24px 53px 0 4px; }
    .lfile { width: 119px; }
    .phead { height: 72px; flex: none; padding: 8px 37px 0 32px; display: flex; align-items: center; justify-content: space-between; }
    .pages { height: 908px; flex: none; border-bottom: 2px solid #e5e5e5; }
    .row { height: 64px; flex: none; display: flex; align-items: center; padding-left: 37px; }
    .row .ic { width: 43px; flex: none; display: flex; }
    .row.on { background: #e5f4ff; }
    .row.in { padding-left: 85px; }

    .stage { position: relative; background: #e5e5e5; overflow: hidden; }
    .stage text { font-family: Inter, "Liberation Sans", sans-serif; letter-spacing: 0; }
    .hlbl { font-size: 20px; }
    .scroll { position: absolute; left: 2470px; top: 412px; width: 12px; height: 1300px; border-radius: 7px; background: #9d9d9d; box-shadow: 0 0 0 2px #ececec; }

    .props { border-left: 2px solid #e3e3e3; background: #fff; }
    .ptabs { height: 80px; display: flex; align-items: center; padding-left: 32px; gap: 31px; }
    .align { height: 82px; padding-bottom: 17px; display: flex; border-bottom: 2px solid #e5e5e5; }
    .sec { border-bottom: 2px solid #e5e5e5; padding: 16px 32px 16px 32px; }
    .sh { height: 64px; display: flex; align-items: center; }
    .grow { flex: 1; }
    .sh svg { margin-right: 5px; }
    .sh .four { margin-right: 43px; }
    .chv { margin-left: 10px; }
    .f { height: 64px; display: grid; grid-template-columns: 49px 143px 49px 144px 1fr; align-items: center; }
    .f .k { padding-left: 8px; color: #808080; }
    .lay { height: 64px; display: flex; align-items: center; }
    .sbtn { height: 64px; border: 2px solid #1e1e1e; border-radius: 12px; display: grid; place-items: center; }
    .bpad { padding: 16px 0; }

    .toast { position: absolute; left: 2656px; top: 1812px; width: 640px; height: 128px; border-radius: 10px; background: #1e1e1e; color: #fff; display: grid; grid-template-columns: 496px 1fr; box-shadow: 0 10px 30px rgba(0,0,0,.22), 0 4px 14px rgba(0,0,0,.16); }
    .msg { display: flex; align-items: center; padding-left: 31px; gap: 30px; }
    .acts { border-left: 2px solid #383838; display: grid; grid-template-rows: 65px 63px; }
    .acts div { display: grid; place-items: center; }
    .acts .r { border-bottom: 2px solid #383838; }
    .help { position: absolute; left: 3344px; top: 1876px; width: 64px; height: 64px; border-radius: 50%; background: #1e1e1e; display: grid; place-items: center; }
  `;

  private tabBar() {
    return html`<div class="tabs">
      <div class="lights"><i class="light"></i><i class="light"></i><i class="light"></i></div>
      <div class="home">${box(26, 28, svg`<path d="M13 0L26 9V28H17.500V17.500H9V28H0V9Z" fill="#bdbdbd"/>`)}</div>
      ${TABS.map((t) => html`<div class=${classMap({ tab: true, on: !!t.on })} style="width:${t.w}px">
        ${fileIcon(!!t.on)}<span>${t.t}</span>
        ${t.on ? box(16, 16, svg`<path d="M1 1L15 15M15 1L1 15" stroke="#ccc" stroke-width="2.400"/>`, "close") : nothing}</div>`)}
      <div class="newtab">${plus("#bdbdbd", 20, 2.200)}</div>
      <div class="more">${box(32, 8, svg`<circle cx="4" cy="4" r="3" fill="#bdbdbd"/><circle cx="16" cy="4" r="3" fill="#bdbdbd"/><circle cx="28" cy="4" r="3" fill="#bdbdbd"/>`)}</div>
    </div>`;
  }

  private toolBar() {
    const w = (x: number, n: number, body: unknown, cls = "") =>
      html`<svg class=${cls} width=${n} height="96" viewBox="${x} 76 ${n} 96" fill="none" stroke="#fff" stroke-width="2">${body}</svg>`;
    const code = svg`<path d="M-8 -6L-14 0L-8 6M8 -6L14 0L8 6M3 -7.500L-3 7.500" />`;
    return html`<div class="toolbar">
      <div class="tools">
        ${w(0, 104, svg`<path d="M40 108H35.500a5 5 0 0 0 0 10H40ZM40 108h4.500a5 5 0 0 1 0 10H40ZM40 118H35.500a5 5 0 0 0 0 10H40ZM40 128H35.500a5 5 0 1 0 4.500 5Z"/><circle cx="45" cy="123" r="5"/>${chev(72, 124)}`)}
        ${w(104, 96, svg`<path d="M134.500 109.500L158.500 123.500L147 126L140.500 136Z"/>${chev(182, 124)}`, "sel")}
        ${w(200, 96, svg`<path d="M236 107v32M252 107v32M228 115h32M228 131h32"/>${chev(278, 124)}`)}
        ${w(296, 96, svg`<rect x="323" y="108" width="31" height="30"/>${chev(374, 124)}`)}
        ${w(392, 96, svg`<path d="M419 108L434 111.500C441 114 444.500 118 444.500 124.500V127.500L448.500 132L442 137.500L438 132.500C430 134.500 424.500 130 422.500 123Z" stroke-linejoin="miter"/><path d="M420 109L434 123"/><circle cx="434" cy="123" r="3" fill="#fff" stroke="none"/>${chev(470, 124)}`)}
        ${w(488, 80, svg`<path d="M515 115V108H539V115M527 108V138M520 138h14"/>`)}
        ${w(568, 80, svg`<path d="M595 108h10v10h-10zM613 126h10v10h-10zM618 107v12M612 113h12M600 124.500l6.500 6.500l-6.500 6.500l-6.500 -6.500z"/>`)}
        ${w(648, 80, svg`<path d="M678.500 125V111.500a3 3 0 0 1 6 0V121V107.500a3.200 3.200 0 0 1 6.400 0V121V109a3 3 0 0 1 6 0V121V114.500a3.200 3.200 0 0 1 6.400 0V130C703.500 138 698 142 691 142C686 142 683 140.500 680 137L671.500 128C668 123.500 672.500 119.500 676.500 122.500L678.500 124.500"/>`)}
        ${w(728, 80, svg`<path d="M750 138.500L754.500 130A15 15 0 1 1 760 136.500Z"/>`)}
      </div>
      <div class="mid">
        ${w(1560, 80, svg`${[[1600, 112.500], [1591, 123], [1609, 123], [1600, 133.500]].map(([x, y]) => svg`<path d="M${x} ${y - 6.500}l6.500 6.500l-6.500 6.500l-6.500 -6.500z"/>`)}`)}
        ${w(1640, 80, svg`<circle cx="1680" cy="123" r="15"/><path d="M1680 108a15 15 0 0 0 0 30C1683 135 1683.500 129 1683.500 123S1683 111 1680 108Z" fill="#fff" stroke="none"/>`)}
        ${w(1720, 96, svg`<path d="M1746 107h22v10h10v22h-21v-10h-11z" fill="#fff" stroke="none"/>${chev(1797.500, 124)}`)}
        ${w(1816, 80, svg`<g transform="translate(1848.500 111)" stroke-width="1.800"><path d="M-7 -5.500L-13 0L-7 5.500M7 -5.500L13 0L7 5.500M2.500 -6L-2.500 6"/></g><path d="M1841 123V138H1871V108H1867"/>`)}
      </div>
      <div class="right">
        <div class="who"><div class="face">W</div>${box(12, 8, chev(6, 4))}</div>
        <div class="share">Share</div>
        <div class="dev"><div class="knob">${box(32, 18, svg`<g transform="translate(16 9)" stroke="#fff" stroke-width="2">${code}</g>`)}</div></div>
        ${w(3120, 120, svg`<path d="M3171 111L3191 123.500L3171 136Z"/>${chev(3214, 124)}`)}
        <div class="aq">A?</div>
        <div class="zoom"><span>3%</span>${box(12, 8, chev(6, 4))}</div>
      </div>
    </div>`;
  }

  private leftPanel() {
    return html`<div class="left">
      <div class="ltabs">
        ${box(26, 26, svg`<circle cx="10.500" cy="10.500" r="7.500" stroke="#b3b3b3" stroke-width="2"/><path d="M16 16L24 24" stroke="#b3b3b3" stroke-width="2"/>`)}
        <span class="lname b">Layers</span><span class="lassets grey">Assets</span><i class="ldot"></i><span class="lfile">Rough ...</span>
        ${box(14, 8, svg`<path d="M1 7l6 -6l6 6" stroke="#b3b3b3" stroke-width="2"/>`)}
      </div>
      <div class="pages">
        <div class="phead"><span class="b">Pages</span>${plus("#1e1e1e")}</div>
        ${PAGES.map((p, i) => html`<div class="row"><span class="ic">${i === 10 ? box(16, 14, svg`<path d="M1 7L6 12L15 1.500" stroke="#1e1e1e" stroke-width="3"/>`) : nothing}</span><span class=${i === 10 ? "m" : ""}>${p}</span></div>`)}
      </div>
      <div class="row on"><span class="ic">${groupIcon("#1e1e1e")}</span><span>Group 1619</span></div>
      ${FRAMES.map((n) => html`<div class="row"><span class="ic">${frameIcon}</span><span class="b num">Frame ${n}</span></div>`)}
      <div class="row"><span class="ic">${textIcon}</span><span>get this right - in terms of upload ...</span></div>
      <div class="row"><span class="ic">${groupIcon("#b3b3b3")}</span><span>Header - current view</span></div>
      <div class="row in"><span class="ic">${textIcon}</span><span>Small but Mighty</span></div>
    </div>`;
  }

  private stage() {
    return html`<div class="stage">
      <svg width="2492" height="1816" viewBox="482 172 2492 1816" fill="none">
        ${leftArea}${docs}
        <rect x="1475" y="1128" width="748" height="245" stroke="#4597f7" stroke-width="2.400"/>
        ${[[1475.500, 1128.500], [2223, 1128.500], [1475.500, 1372.500], [2223, 1372.500]].map(([x, y]) => svg`<rect x=${x - 6.500} y=${y - 6.500} width="13" height="13" fill="#fff" stroke="#4597f7" stroke-width="2"/>`)}
        <rect x="1769" y="1387" width="159" height="34" rx="4" fill="#4597f7"/>
        <text x="1848.500" y="1412" font-size="22" font-weight="500" fill="#fff" text-anchor="middle">13618 × 4444</text>

        <rect x="482" y="172" width="2492" height="40" fill="#fff"/><rect x="482" y="172" width="40" height="1816" fill="#fff"/>
        <rect x="1475" y="172" width="748" height="40" fill="#e5f4ff"/><rect x="482" y="1129" width="40" height="243" fill="#e5f4ff"/>
        <rect x="482" y="211" width="2492" height="2" fill="#e3e3e3"/><rect x="522" y="172" width="1" height="40" fill="#e3e3e3"/>
        <g class="hlbl" fill="#b3b3b3" text-anchor="middle">
          ${H_LABELS.map((n) => {
            const x = 1518.800 + (n / 2500) * UNIT;
            return svg`<g opacity=${n === -17500 ? 0.6 : 1}><text x=${x} y="194.500">${n}</text><rect x=${x - 1} y="204" width="2" height="8"/></g>`;
          })}
          ${V_LABELS.map((n) => {
            const y = 347 + (n / 2500) * UNIT;
            return svg`<g opacity=${n === 17500 ? 0.5 : 1}><text transform="translate(503.500 ${y}) rotate(-90)">${n}</text><rect x="514" y=${y - 1} width="8" height="2"/></g>`;
          })}
        </g>
        <g class="hlbl" fill="#2e7fe8">
          <text x="1463" y="194.500" text-anchor="end">-776</text><text x="2236" y="194.500">12842</text>
          <text transform="translate(503.500 1116) rotate(-90)">14261</text>
          <text transform="translate(503.500 1386) rotate(-90)" text-anchor="end">18705</text>
        </g>
      </svg>
      <div class="scroll"></div>
    </div>`;
  }

  private alignIcons() {
    const k = "#1e1e1e";
    return html`<div class="align"><svg width="480" height="64" viewBox="2976 252 480 64" fill="none" stroke=${k}>
      <path stroke-width="2" d="M3011 271v26M3088 271v26M3165 271v26M3203 271h26M3267 284h26M3331 297h26M3387 272.500h26M3387 295.500h26"/>
      <path stroke-width="4" d="M3016 279h20M3016 289h12M3077 279h22M3081 289h14M3139 279h21M3148 289h12M3211 276v20M3221 276v12M3275 273v22M3285 277v14M3339 272v20M3349 280v12M3393 284h14"/>
      ${chev(3424, 284, k)}
    </svg></div>`;
  }

  private sec(title: string, grey: boolean, four: boolean, body: unknown = nothing) {
    return html`<div class="sec"><div class="sh"><span class=${grey ? "b grey" : "b"}>${title}</span><span class="grow"></span>
      ${four ? box(20, 20, svg`<circle cx="4" cy="4" r="3.200" fill="#1e1e1e"/><circle cx="16" cy="4" r="3.200" fill="#1e1e1e"/><circle cx="4" cy="16" r="3.200" fill="#1e1e1e"/><circle cx="16" cy="16" r="3.200" fill="#1e1e1e"/>`, "four") : nothing}
      ${plus(grey ? "#808080" : "#1e1e1e")}</div>${body}</div>`;
  }

  private props() {
    const c = html`<span class="chv">${box(14, 8, chev(7, 4, "#b3b3b3"))}</span>`;
    const mixed = html`<div class="lay grey">Click + to replace mixed content.</div>`;
    return html`<div class="props">
      <div class="ptabs"><span class="b">Design</span><span class="grey">Prototype</span></div>
      ${this.alignIcons()}
      <div class="sec">
        <div class="sh"><span class="b">Group</span>${c}</div>
        <div class="f"><span class="k">X</span><span>-776</span><span class="k">Y</span><span>14261</span></div>
        <div class="f"><span class="k">W</span><span>13618</span><span class="k">H</span><span>4444</span>
          ${box(30, 30, svg`<path d="M9.500 11V7a5.500 5.500 0 0 1 11 0V11M9.500 19V23a5.500 5.500 0 0 0 11 0V19" stroke="#1e1e1e" stroke-width="2"/>`)}</div>
        <div class="f"><span class="k">${box(16, 16, svg`<path d="M1 0V15H16M1 7a8 8 0 0 1 8 8" stroke="#808080" stroke-width="2"/>`)}</span><span>0°</span>
          <span class="k">${box(18, 18, svg`<path d="M1 18V12A11 11 0 0 1 12 1H18" stroke="#808080" stroke-width="2"/>`)}</span><span>Mixed</span>
          ${box(30, 30, svg`<path d="M4 10V7a3 3 0 0 1 3 -3H11M19 4H23a3 3 0 0 1 3 3V10M26 20V23a3 3 0 0 1 -3 3H19M11 26H7a3 3 0 0 1 -3 -3V20" stroke="#1e1e1e" stroke-width="2"/>`)}</div>
      </div>
      ${this.sec("Auto layout", true, false)}
      <div class="sec">
        <div class="sh"><span class="b">Layer</span></div>
        <div class="lay"><svg width="49" height="20" viewBox="0 0 49 20" fill="none"><path d="M16 1L21.500 6.500A7.600 7.600 0 1 1 10.500 6.500Z" stroke="#808080" stroke-width="2"/></svg>
          <span>Pass through</span>${c}<span class="grow"></span><span>100%</span>
          <svg width="70" height="20" viewBox="-41 -10 70 20" fill="none"><path d="M1 0C7 -9.500 19 -9.500 25 0C19 9.500 7 9.500 1 0Z" stroke="#1e1e1e" stroke-width="2"/><circle cx="13" cy="0" r="4.500" fill="#1e1e1e"/></svg></div>
      </div>
      ${this.sec("Fill", false, true, mixed)}
      ${this.sec("Stroke", false, true, html`${mixed}<div class="lay"><span>Mixed</span>${c}<span class="grow"></span>
        <svg width="44" height="24" viewBox="0 0 44 24"><path d="M0 1h24v1.600H0zM0 9h24v3.400H0zM0 18.500h24v5H0z" fill="#808080"/></svg><span>Mixed</span>
        <svg width="114" height="24" viewBox="1 0 114 24" fill="none"><path d="M28.500 1h11M28.500 23h11M23.500 6v12M46 6v12" stroke="#1e1e1e" stroke-width="2"/><circle cx="87" cy="12" r="3" fill="#1e1e1e"/><circle cx="99" cy="12" r="3" fill="#1e1e1e"/><circle cx="111" cy="12" r="3" fill="#1e1e1e"/></svg></div>`)}
      <div class="sec"><div class="sh"><span class="b">Selection colors</span></div><div class="bpad"><div class="sbtn">Show selection colors</div></div></div>
      ${this.sec("Effects", true, false)}
      ${this.sec("Export", true, false)}
    </div>`;
  }

  render() {
    return html`<div class="app">
      ${this.tabBar()}${this.toolBar()}
      <div class="main">${this.leftPanel()}${this.stage()}${this.props()}</div>
      <div class="toast">
        <div class="msg">${box(35, 28, svg`<path d="M17.500 6C15 2 10 1.500 7 2C3 2.500 1.500 4.500 1.500 7V25C5 22 14 22 17.500 26C21 22 30 22 33.500 25V7C33.500 4.500 32 2.500 28 2C25 1.500 20 2 17.500 6ZM17.500 6V26" stroke="#fff" stroke-width="2"/>`)}<span>Component updates available</span></div>
        <div class="acts"><div class="r">Review</div><div>Dismiss</div></div>
      </div>
      <div class="help">${box(18, 30, svg`<path d="M1.500 9A7.500 7.500 0 1 1 12.500 15C10 17 9 18.500 9 22" stroke="#fff" stroke-width="2"/><rect x="7.800" y="26" width="2.600" height="2.600" fill="#fff"/>`)}</div>
    </div>`;
  }
}
